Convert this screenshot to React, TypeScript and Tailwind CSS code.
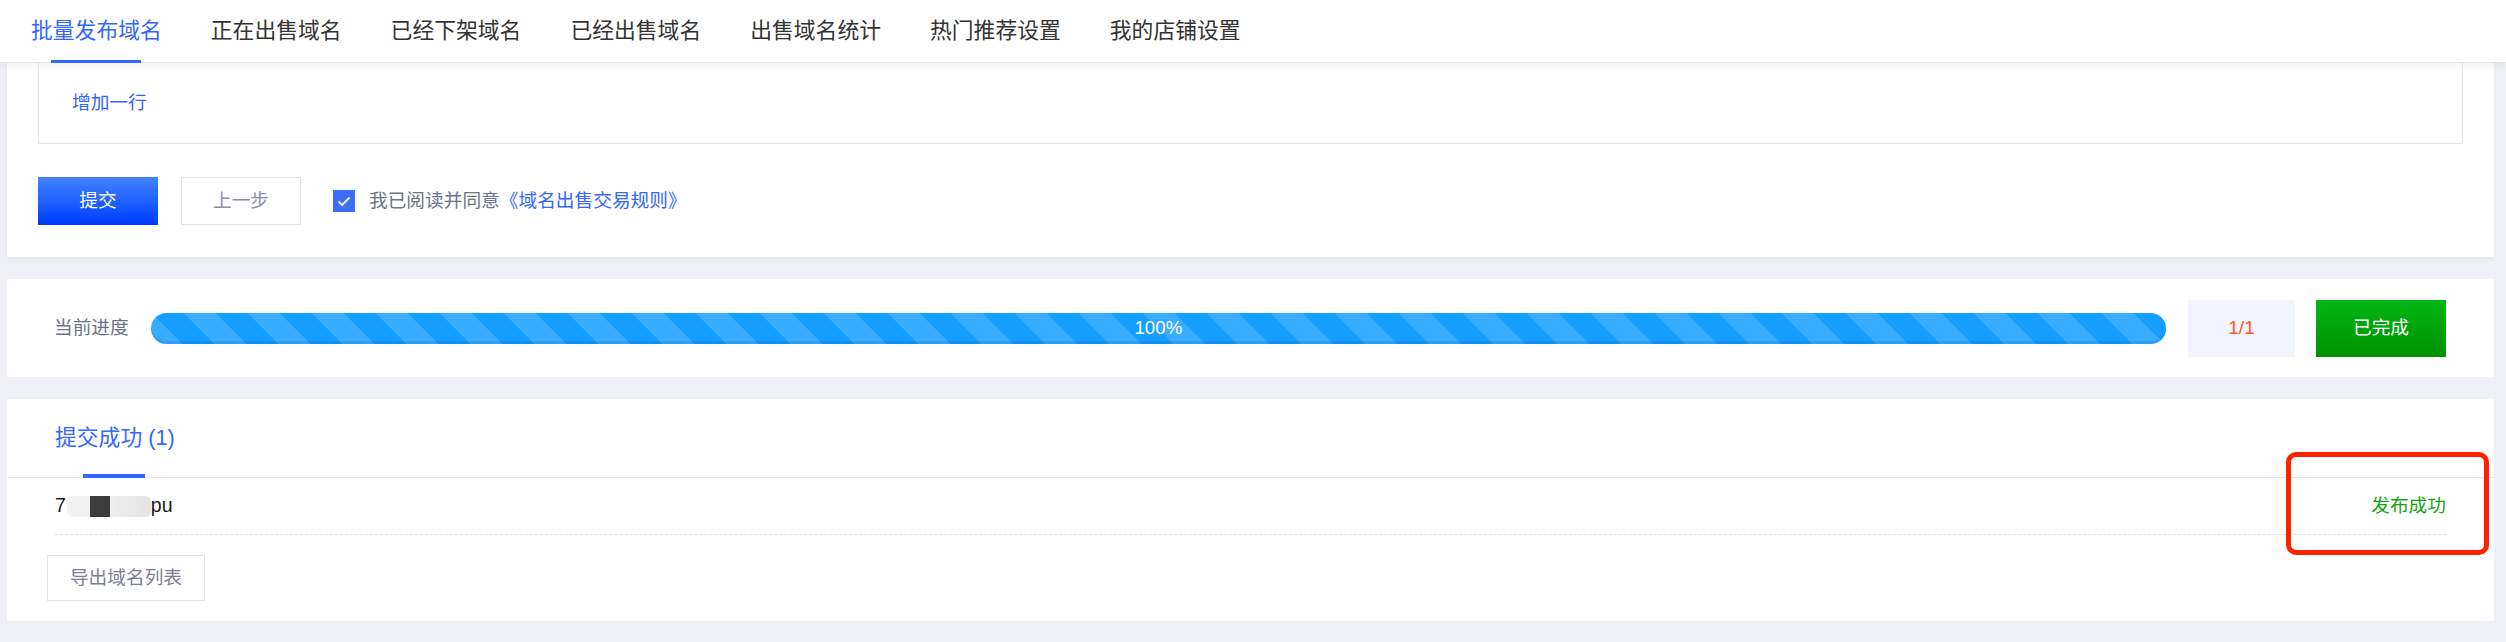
import React from "react";

const tabs = ["批量发布域名", "正在出售域名", "已经下架域名", "已经出售域名", "出售域名统计", "热门推荐设置", "我的店铺设置"];

export default function App() {
  return (
    <div
      className="w-[2506px] h-[642px] bg-[#eef0f5] overflow-hidden"
      style={{ fontFamily: '"Liberation Sans", "Noto Sans CJK SC", sans-serif' }}
    >
      <header className="relative z-10 h-[63px] bg-white border-b border-[#e2e4ec] shadow-[0_3px_8px_rgba(40,50,90,0.06)] flex pl-[31px] gap-[49px]">
        {tabs.map((t, i) => (
          <div
            key={t}
            className={`relative h-full flex items-center text-[21.8px] ${i === 0 ? "text-[#3366ff]" : "text-[#333333]"}`}
          >
            {t}
            {i === 0 && (
              <div className="absolute bottom-[-1px] left-1/2 -translate-x-1/2 w-[90px] h-[3px] bg-[#3366ff]" />
            )}
          </div>
        ))}
      </header>

      <main className="pl-[7px] pr-[12px] flex flex-col gap-[22px]">
        {/* Card 1 */}
        <section className="bg-white px-[31px] pb-[32px] shadow-[0_2px_3px_rgba(40,50,90,0.05)]">
          <div className="h-[81px] border border-t-0 border-[#e1e4ef] flex items-center pl-[33px] text-[18.7px] text-[#3366ff]">
            增加一行
          </div>
          <div className="mt-[33px] flex items-center">
            <button className="w-[120px] h-[48px] bg-gradient-to-b from-[#4382ff] to-[#0036ff] text-white text-[18.7px]">
              提交
            </button>
            <button className="ml-[23px] w-[120px] h-[48px] border border-[#dfe2ec] bg-white text-[#8a8fa6] text-[18.7px]">
              上一步
            </button>
            <div className="ml-[32px] w-[22px] h-[22px] bg-[#3d6cf5] flex items-center justify-center">
              <svg width="14" height="11" viewBox="0 0 14 11" fill="none">
                <path d="M1.5 5.5 L5.2 9 L12.5 1.5" stroke="white" strokeWidth="1.8" />
              </svg>
            </div>
            <span className="ml-[14px] text-[18.7px] text-[#6e7387]">
              我已阅读并同意<span className="text-[#3366ff]">《域名出售交易规则》</span>
            </span>
          </div>
        </section>

        {/* Card 2 */}
        <section className="bg-white h-[98px] flex items-center pl-[47px] pr-[48px]">
          <span className="text-[18.7px] text-[#6e7387] whitespace-nowrap">当前进度</span>
          <div className="ml-[22px] flex-1 h-[31px] rounded-full overflow-hidden relative bg-[repeating-linear-gradient(45deg,#38acff_0px,#38acff_22.6px,#149eff_22.6px,#149eff_45.2px)] shadow-[inset_0_-3px_0_rgba(0,90,200,0.18)] flex items-center justify-center">
            <span className="text-white text-[18.7px]">100%</span>
          </div>
          <div className="ml-[22px] w-[107px] h-[57px] bg-[#f2f5fd] flex items-center justify-center text-[19px] text-[#ff5722]">
            1/1
          </div>
          <div className="ml-[21px] w-[130px] h-[57px] bg-gradient-to-b from-[#00b814] to-[#009000] flex items-center justify-center text-[18.7px] text-white">
            已完成
          </div>
        </section>

        {/* Card 3 */}
        <section className="bg-white h-[222px] relative">
          <div className="h-[79px] border-b border-[#e3e5ef] pl-[48px] flex">
            <div className="relative h-full flex items-center text-[21.8px] text-[#3366ff]">
              提交成功 (1)
              <div className="absolute bottom-[-1px] left-[28px] w-[62px] h-[4px] bg-[#3366ff]" />
            </div>
          </div>
          <div className="mx-[48px] h-[57px] border-b border-dashed border-[#e0e0e0] flex items-center justify-between">
            <span className="flex items-center text-[19.5px] font-medium text-[#1a1a1a]">
              7
              <span className="ml-[1px] w-[84px] h-[21px] rounded-[6px] bg-gradient-to-r from-[#f4f4f4] via-[#eeeeee] to-[#e4e4e4] flex items-center">
                <span className="ml-[23px] w-[20px] h-[21px] bg-[#3c3c3c]" />
              </span>
              pu
            </span>
            <span className="text-[18.7px] text-[#13a313]">发布成功</span>
          </div>
          <button className="ml-[40px] mt-[20px] w-[158px] h-[46px] border border-[#dfe2ec] bg-white text-[18.7px] text-[#7b8094]">
            导出域名列表
          </button>
          <div className="absolute left-[2279px] top-[53px] w-[203px] h-[103px] border-[5px] border-[#ff2200] rounded-[10px]" />
        </section>
      </main>
    </div>
  );
}
